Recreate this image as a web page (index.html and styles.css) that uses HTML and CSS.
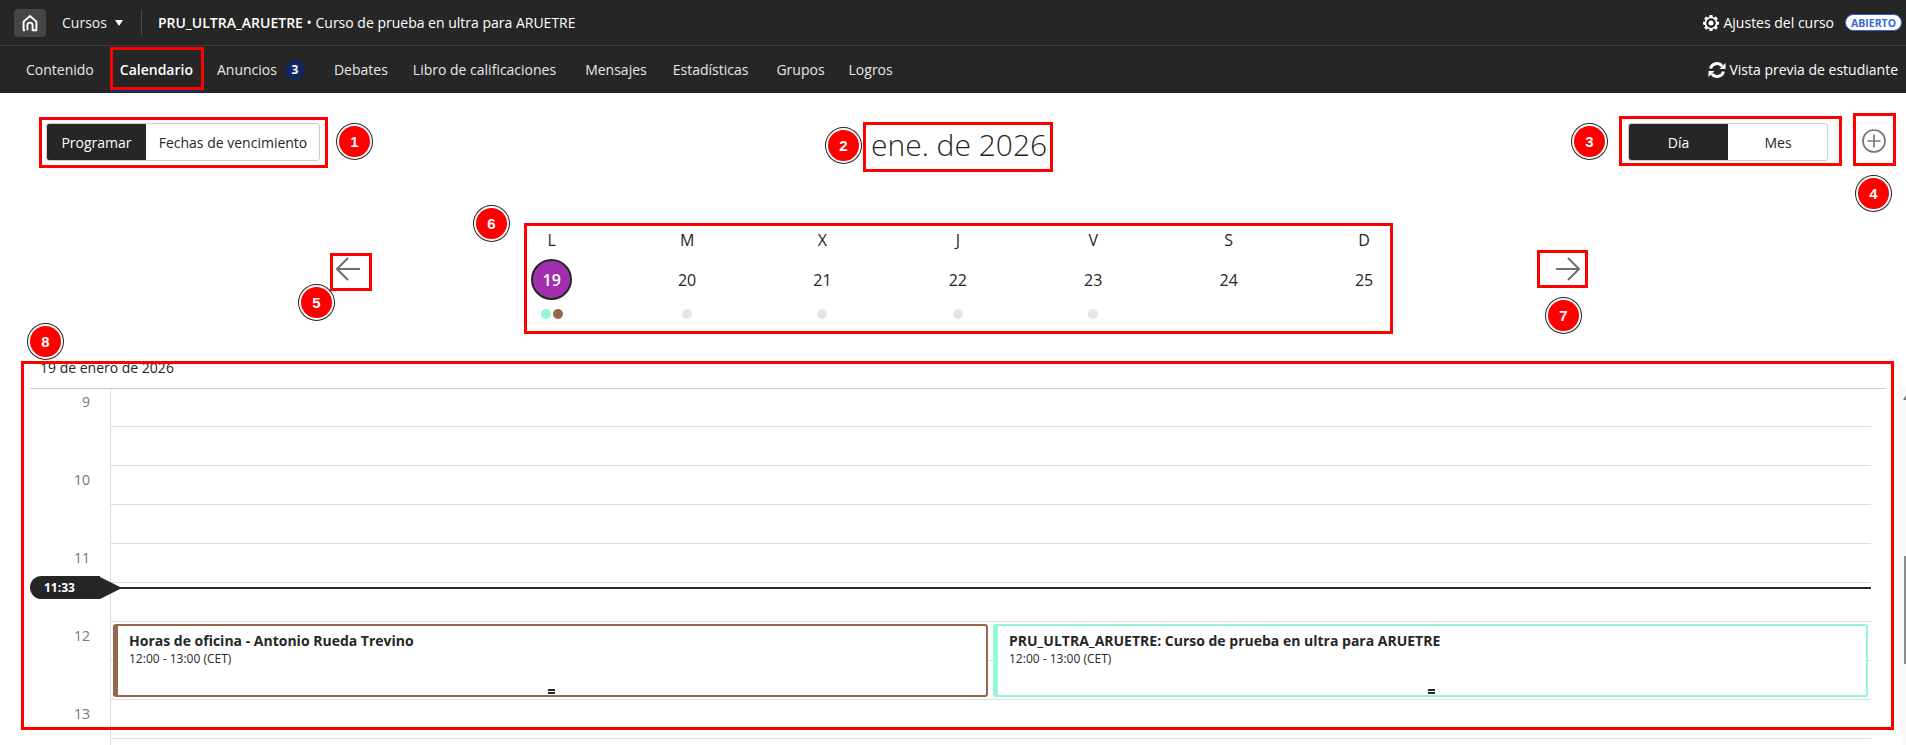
FILE: index.html
```html
<!DOCTYPE html>
<html lang="es">
<head>
<meta charset="utf-8">
<title>Calendario</title>
<link rel="stylesheet" href="styles.css">
</head>
<body>
<header class="top-bar">
  <a class="home-btn" aria-label="Inicio">
    <svg class="home-icon" viewBox="0 0 18 18"><path d="M4 16.200H2.600V7.600L9 2l6.400 5.600v8.600H11.600V11.200a2.600 2.600 0 0 0-5.200 0v5" fill="none" stroke="#fff" stroke-width="1.900" stroke-linejoin="round"/></svg>
  </a>
  <span class="courses">Cursos</span>
  <span class="caret"></span>
  <span class="top-sep"></span>
  <div class="course-title"><strong>PRU_ULTRA_ARUETRE</strong> • Curso de prueba en ultra para ARUETRE</div>
  <div class="settings">
    <svg class="gear" viewBox="0 0 16 16"><path fill="#fff" fill-rule="evenodd" d="M6.600 0h2.800l.4 2.100 1.200.5L12.800 1.400l2 2-1.200 1.800.5 1.200L16 6.800v2.800l-1.900.4-.5 1.200 1.200 1.600-2 2-1.800-1.200-1.200.5-.4 2.100H6.600l-.4-2.100-1.200-.5-1.800 1.200-2-2 1.200-1.600-.5-1.200L0 9.600V6.800l1.900-.4.5-1.200-1.200-1.800 2-2L5 2.600l1.200-.5zM8 3.300a4.800 4.800 0 1 0 0 9.600 4.800 4.800 0 0 0 0-9.600zM8 5.600a2.500 2.500 0 1 1 0 5 2.500 2.500 0 0 1 0-5z"/></svg>
    <span>Ajustes del curso</span>
  </div>
  <span class="open-badge">ABIERTO</span>
</header>
<nav class="nav-bar">
  <a class="nav-item">Contenido</a>
  <a class="nav-item active">Calendario</a>
  <a class="nav-item with-badge">Anuncios <span class="count">3</span></a>
  <a class="nav-item n-debates">Debates</a>
  <a class="nav-item n-grades">Libro de calificaciones</a>
  <a class="nav-item">Mensajes</a>
  <a class="nav-item n-stats">Estadísticas</a>
  <a class="nav-item n-groups">Grupos</a>
  <a class="nav-item">Logros</a>
  <div class="preview">
    <svg class="refresh" viewBox="0 0 18 16"><path d="M2.500 6.500A6.500 6.500 0 0 1 14 4.200" fill="none" stroke="#fff" stroke-width="3"/><path d="M15.500 9.500A6.500 6.500 0 0 1 4 11.800" fill="none" stroke="#fff" stroke-width="3"/><path d="M17.500 1v6h-6z" fill="#fff"/><path d="M.5 15V9h6z" fill="#fff"/></svg>
    <span>Vista previa de estudiante</span>
  </div>
</nav>
<main>
  <section class="toolbar">
    <div class="segmented schedule">
      <span class="seg seg-on">Programar</span>
      <span class="seg seg-off">Fechas de vencimiento</span>
    </div>
    <h1 class="month">ene. de 2026</h1>
    <div class="tool-right">
      <div class="segmented view">
        <span class="seg seg-on">Día</span>
        <span class="seg seg-off">Mes</span>
      </div>
      <svg class="add" viewBox="0 0 24 24"><circle cx="12" cy="12" r="11" fill="none" stroke="#767676" stroke-width="1.700"/><path d="M12 5.500v13M5.500 12h13" stroke="#767676" stroke-width="1.700"/></svg>
    </div>
  </section>
  <section class="week-row">
    <svg class="arrow" viewBox="0 0 24 24"><path d="M24 12H1M12 1 1 12l11 11" fill="none" stroke="#6f6f6f" stroke-width="2"/></svg>
    <div class="week">
      <div class="day"><span class="letter">L</span><span class="num today">19</span><span class="dots"><i class="dot teal"></i><i class="dot brown"></i></span></div>
      <div class="day"><span class="letter">M</span><span class="num">20</span><span class="dots"><i class="dot grey"></i></span></div>
      <div class="day"><span class="letter">X</span><span class="num">21</span><span class="dots"><i class="dot grey"></i></span></div>
      <div class="day"><span class="letter">J</span><span class="num">22</span><span class="dots"><i class="dot grey"></i></span></div>
      <div class="day"><span class="letter">V</span><span class="num">23</span><span class="dots"><i class="dot grey"></i></span></div>
      <div class="day"><span class="letter">S</span><span class="num">24</span><span class="dots"></span></div>
      <div class="day"><span class="letter">D</span><span class="num">25</span><span class="dots"></span></div>
    </div>
    <svg class="arrow" viewBox="0 0 24 24"><path d="M0 12h23M12 1l11 11-11 11" fill="none" stroke="#6f6f6f" stroke-width="2"/></svg>
  </section>
  <div class="date-label">19 de enero de 2026</div>
  <section class="agenda">
    <span class="hour h9">9</span>
    <span class="hour h10">10</span>
    <span class="hour h11">11</span>
    <span class="hour h12">12</span>
    <span class="hour h13">13</span>
    <span class="slot s1"></span><span class="slot s2"></span><span class="slot s3"></span><span class="slot s4"></span><span class="slot s5"></span>
    <span class="slot s6"></span><span class="slot s7"></span><span class="slot s8"></span><span class="slot s9"></span>
    <div class="events">
      <article class="event office">
        <div class="ev-title">Horas de oficina - Antonio Rueda Trevino</div>
        <div class="ev-time">12:00 - 13:00 (CET)</div>
        <span class="handle"></span>
      </article>
      <article class="event course">
        <div class="ev-title">PRU_ULTRA_ARUETRE: Curso de prueba en ultra para ARUETRE</div>
        <div class="ev-time">12:00 - 13:00 (CET)</div>
        <span class="handle"></span>
      </article>
    </div>
    <div class="now"><span class="now-pill">11:33</span><span class="now-tip"></span><span class="now-line"></span></div>
  </section>
</main>
<div class="scroll-track"><span class="scroll-up"></span><span class="scroll-thumb"></span></div>

<div class="box b-cal"></div>
<div class="box b1"></div>
<div class="box b2"></div>
<div class="box b3"></div>
<div class="box b4"></div>
<div class="box b5"></div>
<div class="box b6"></div>
<div class="box b7"></div>
<div class="box b8"></div>
<span class="mark m1">1</span>
<span class="mark m2">2</span>
<span class="mark m3">3</span>
<span class="mark m4">4</span>
<span class="mark m5">5</span>
<span class="mark m6">6</span>
<span class="mark m7">7</span>
<span class="mark m8">8</span>
</body>
</html>
```
FILE: styles.css
```css
* { box-sizing: border-box; }
html, body { margin: 0; padding: 0; }
body {
  position: relative;
  height: 745px;
  overflow: hidden;
  background: #fff;
  color: #262626;
  font-family: "Open Sans", "Liberation Sans", sans-serif;
  font-size: 14px;
}

/* top bar */
.top-bar {
  display: flex;
  align-items: center;
  height: 46px;
  padding-left: 14px;
  background: #262626;
  border-bottom: 1px solid #3d3d3d;
  color: #fff;
}
.home-btn {
  display: flex;
  align-items: center;
  justify-content: center;
  width: 32px;
  height: 28px;
  background: #464646;
  border-radius: 4px;
}
.home-icon { width: 18px; height: 18px; }
.courses { margin-left: 16px; color: #f0f0f0; }
.caret {
  width: 0; height: 0;
  margin-left: 8px;
  border-left: 4.500px solid transparent;
  border-right: 4.500px solid transparent;
  border-top: 6px solid #fff;
}
.top-sep { width: 1px; height: 26px; margin-left: 18px; background: #4a4a4a; }
.course-title { margin-left: 16px; }
.course-title strong { font-weight: 600; }
.settings { display: flex; align-items: center; gap: 4px; margin-left: auto; }
.gear { width: 16px; height: 16px; }
.open-badge {
  display: flex;
  align-items: center;
  justify-content: center;
  width: 57px;
  height: 17px;
  margin: 0 4px 0 11px;
  background: #fff;
  border: 1px solid #2f5fe0;
  border-radius: 9px;
  color: #3b66e0;
  font-size: 10.500px;
  font-weight: 700;
}

/* nav */
.nav-bar {
  display: flex;
  align-items: center;
  gap: 26px;
  height: 47px;
  padding: 0 8px 0 26px;
  background: #262626;
  color: #e8e8e8;
}
.nav-item { position: relative; display: flex; align-items: center; gap: 8px; }
.nav-item.active { margin-right: -2px; color: #fff; font-weight: 600; }
.nav-item.active::after {
  content: "";
  position: absolute;
  left: -10px; right: -10px; bottom: -13px;
  height: 3px;
  background: #1b2d6b;
}
.with-badge { margin-right: 3px; }
.n-debates { margin-right: -1px; }
.n-grades { margin-right: 3px; }
.n-stats { margin-right: 2px; }
.n-groups { margin-right: -2px; }
.count {
  display: flex;
  align-items: center;
  justify-content: center;
  width: 20px;
  height: 20px;
  background: #12275f;
  border-radius: 50%;
  color: #fff;
  font-size: 12px;
  font-weight: 700;
}
.preview { display: flex; align-items: center; gap: 3px; margin-left: auto; color: #fff; }
.refresh { width: 18px; height: 16px; }

/* toolbar */
.toolbar {
  display: grid;
  grid-template-columns: 825px 174px 1fr;
  align-items: center;
  height: 38px;
  margin-top: 30px;
  padding-left: 46px;
}
.segmented {
  display: flex;
  height: 38px;
  border: 1px solid #ccc;
  border-radius: 3px;
  overflow: hidden;
}
.schedule { width: 274px; }
.view { width: 200px; }
.seg { display: flex; align-items: center; justify-content: center; }
.seg-on { background: #262626; color: #fff; width: 100px; margin: -1px 0 -1px -1px; padding-left: 1px; }
.seg-off { flex: 1; padding-left: 1px; }
.month {
  position: relative;
  top: 3px;
  margin: 0;
  font-size: 30px;
  font-weight: 300;
  line-height: 38px;
  white-space: nowrap;
}
.tool-right { display: flex; align-items: center; justify-content: flex-end; gap: 34px; padding-right: 20px; }
.add { width: 24px; height: 24px; margin-top: -2px; }

/* week */
.week-row { display: flex; align-items: flex-start; margin-top: 69px; padding-left: 336px; }
.arrow { width: 24px; height: 24px; margin-top: 27px; }
.week {
  display: grid;
  grid-template-columns: repeat(7, 135.400px);
  width: 948px;
  margin: 0 124px;
}
.day { display: flex; flex-direction: column; align-items: center; }
.letter { height: 20px; font-size: 16px; line-height: 20px; }
.num {
  display: flex;
  align-items: center;
  justify-content: center;
  width: 41px;
  height: 41px;
  margin-top: 9px;
  border-radius: 50%;
  font-size: 16px;
}
.today { background: #a12fad; border: 2px solid #262626; color: #fff; font-weight: 600; }
.dots { display: flex; gap: 2px; height: 10px; margin-top: 9px; }
.dot { width: 10px; height: 10px; border-radius: 50%; }
.teal { background: #97f5db; }
.brown { background: #96674e; }
.grey { background: #e5e5e5; }

/* agenda */
.date-label { margin-top: 39px; padding-left: 40px; line-height: 20px; font-size: 14px; }
.agenda {
  position: relative;
  display: grid;
  grid-template-columns: 81px 1fr;
  grid-template-rows: 38px repeat(8, 39px);
  width: 1856px;
  margin: 10px 0 0 30px;
  padding-right: 15px;
  border-top: 1px solid #ccc;
}
.agenda::before {
  content: "";
  grid-column: 1;
  grid-row: 1 / 11;
  border-right: 1px solid #ddd;
  height: 360px;
}
.hour { grid-column: 1; padding: 4px 21px 0 0; text-align: right; color: #767676; font-size: 14px; line-height: 20px; }
.h9 { grid-row: 1; padding-top: 3px; }
.h10 { grid-row: 3; }
.h11 { grid-row: 5; }
.h12 { grid-row: 7; }
.h13 { grid-row: 9; }
.slot { grid-column: 2; border-bottom: 1px solid #ddd; }
.s1 { grid-row: 1; } .s2 { grid-row: 2; } .s3 { grid-row: 3; }
.s4 { grid-row: 4; } .s5 { grid-row: 5; } .s6 { grid-row: 6; }
.s7 { grid-row: 7; } .s8 { grid-row: 8; } .s9 { grid-row: 9; }
.events {
  grid-column: 2;
  grid-row: 7 / 9;
  display: grid;
  grid-template-columns: 1fr 1fr;
  gap: 5px;
  padding: 2px 3px 3px 2px;
}
.event {
  position: relative;
  padding: 3px 0 0 11px;
  background: #fff;
  border: 2px solid;
  border-radius: 3px;
}
.office { border-color: #96674e; border-left-width: 5px; }
.course { border-color: #97f5db; border-left-width: 5px; }
.ev-title { font-size: 14px; font-weight: 700; line-height: 23px; }
.ev-time { font-size: 12px; line-height: 14px; }
.handle {
  position: absolute;
  left: 50%;
  bottom: 1px;
  width: 7px;
  height: 5px;
  margin-left: -4px;
  border-top: 2px solid #262626;
  border-bottom: 2px solid #262626;
}
.now { position: absolute; left: 0; top: 187px; right: 15px; display: flex; align-items: center; height: 23px; }
.now-pill {
  display: flex;
  align-items: center;
  width: 70px;
  height: 23px;
  padding-left: 14px;
  background: #262626;
  border-radius: 12px 0 0 12px;
  color: #fff;
  font-size: 12px;
  font-weight: 700;
}
.now-tip {
  width: 0; height: 0;
  border-top: 11.500px solid transparent;
  border-bottom: 11.500px solid transparent;
  border-left: 22px solid #262626;
}
.now-line { flex: 1; height: 2px; margin-left: -2px; background: #262626; }

/* scrollbar */
.scroll-track { position: absolute; left: 1902px; top: 388px; width: 4px; height: 357px; background: #f9f9f9; }
.scroll-up { position: absolute; left: 1px; top: 7px; border-left: 3px solid transparent; border-bottom: 5px solid #777; }
.scroll-thumb { position: absolute; left: 2px; top: 168px; width: 2px; height: 108px; background: #8c8c8c; }

/* annotations */
.box { position: absolute; border: 3px solid #f00; }
.b-cal { left: 110px; top: 47px; width: 94px; height: 43px; }
.b1 { left: 39px; top: 117px; width: 289px; height: 51px; }
.b2 { left: 863px; top: 122px; width: 190px; height: 50px; }
.b3 { left: 1619px; top: 116px; width: 223px; height: 50px; }
.b4 { left: 1853px; top: 113px; width: 43px; height: 53px; }
.b5 { left: 330px; top: 253px; width: 42px; height: 38px; }
.b6 { left: 524px; top: 223px; width: 869px; height: 111px; }
.b7 { left: 1537px; top: 250px; width: 51px; height: 38px; }
.b8 { left: 21px; top: 361px; width: 1873px; height: 369px; }
.mark {
  position: absolute;
  display: flex;
  align-items: center;
  justify-content: center;
  width: 35px;
  height: 35px;
  background: #f00;
  border: 2px solid #fff;
  border-radius: 50%;
  box-shadow: 0 0 0 1px #222;
  color: #fff;
  font-family: "Liberation Sans", sans-serif;
  font-size: 15px;
  font-weight: 700;
}
.m1 { left: 337px; top: 124px; }
.m2 { left: 826px; top: 128px; }
.m3 { left: 1572px; top: 124px; }
.m4 { left: 1856px; top: 176px; }
.m5 { left: 299px; top: 285px; }
.m6 { left: 474px; top: 206px; }
.m7 { left: 1546px; top: 298px; }
.m8 { left: 28px; top: 324px; }
```
